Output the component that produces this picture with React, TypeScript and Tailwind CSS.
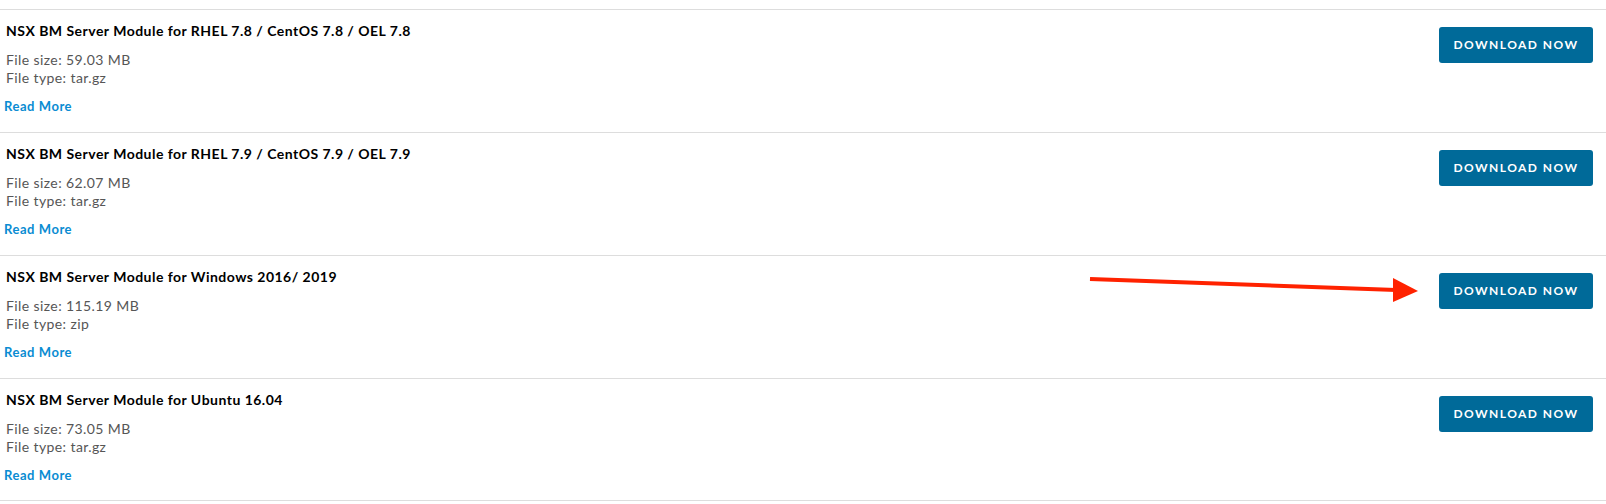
const items = [
  { title: 'NSX BM Server Module for RHEL 7.8 / CentOS 7.8 / OEL 7.8', size: '59.03 MB', type: 'tar.gz' },
  { title: 'NSX BM Server Module for RHEL 7.9 / CentOS 7.9 / OEL 7.9', size: '62.07 MB', type: 'tar.gz' },
  { title: 'NSX BM Server Module for Windows 2016/ 2019', size: '115.19 MB', type: 'zip' },
  { title: 'NSX BM Server Module for Ubuntu 16.04', size: '73.05 MB', type: 'tar.gz' },
];

export default function App() {
  return (
    <div className="relative w-[1606px] h-[504px] bg-white overflow-hidden" style={{ fontFamily: 'Lato, "Open Sans", sans-serif' }}>
      <div className="pt-[9px]">
        {items.map((item, i) => (
          <div key={i} className="flex justify-between h-[123px] border-t border-[#dddddd] last:border-b pl-[6px] pr-[13px]">
            <div className="pt-[11px]">
              <h3 className="text-[14px] leading-5 font-bold text-black tracking-[0.48px]">{item.title}</h3>
              <div className="mt-[10px] text-[14px] leading-[18px] text-[#565656] tracking-[0.4px]">
                <p>File size: {item.size}</p>
                <p>File type: {item.type}</p>
              </div>
              <a href="#" className="block mt-[10px] -ml-[2px] text-[13px] leading-[18px] font-bold text-[#0a8cd2] tracking-[0.55px]">Read More</a>
            </div>
            <div className="pt-[17px]">
              <button className="w-[154px] h-[36px] rounded-[3px] bg-[#006a99] text-white text-[12px] font-bold tracking-[0.12em] uppercase">
                Download Now
              </button>
            </div>
          </div>
        ))}
      </div>
      <svg className="absolute inset-0 pointer-events-none" width="1606" height="504" viewBox="0 0 1606 504">
        <line x1="1090" y1="279" x2="1396" y2="290" stroke="#ff2200" strokeWidth="4" />
        <polygon points="1393,278 1418,291 1393,302" fill="#ff2200" />
      </svg>
    </div>
  );
}
